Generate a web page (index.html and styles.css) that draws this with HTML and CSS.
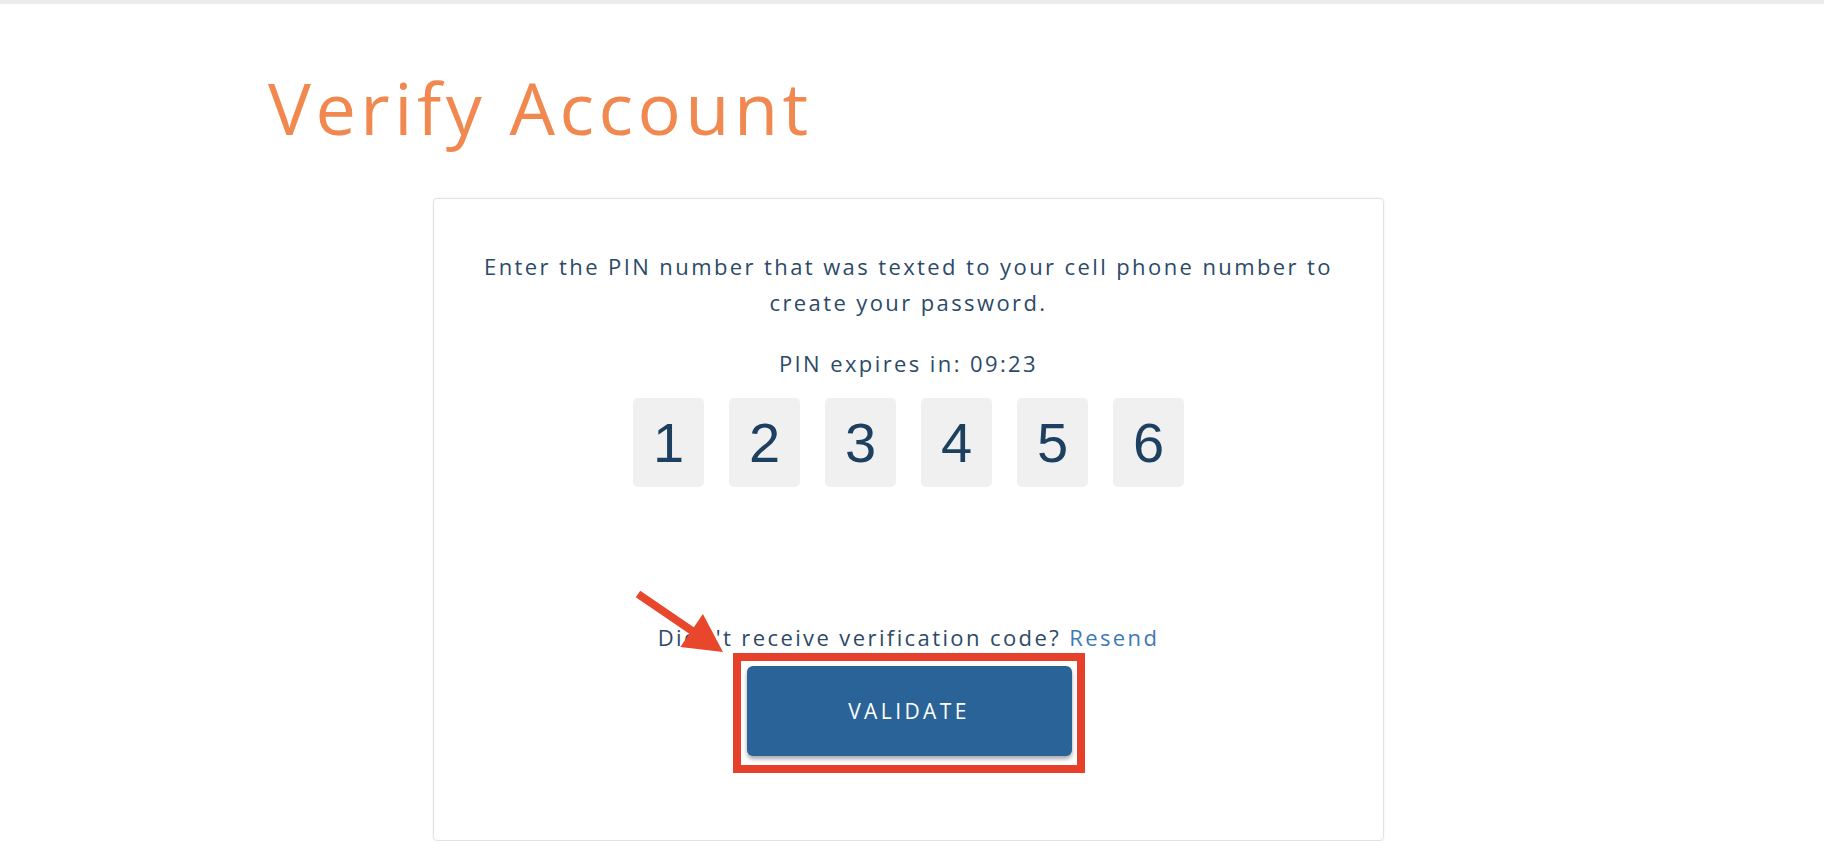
FILE: index.html
```html
<!DOCTYPE html>
<html>
<head>
  <title>Verify Account</title>
  <meta charset="utf-8" />
  <link rel="stylesheet" href="styles.css">
</head>
<body>

  <h1 class="title">Verify Account</h1>

  <div class="card">
    <p class="lead">Enter the PIN number that was texted to your cell phone number to<br>create your password.</p>
    <p class="expire">PIN expires in: <span id="timer">09:23</span></p>

    <div class="pin-row">
      <div class="pin">1</div>
      <div class="pin">2</div>
      <div class="pin">3</div>
      <div class="pin">4</div>
      <div class="pin">5</div>
      <div class="pin">6</div>
    </div>

    <p class="resend">Didn't receive verification code? <a href="#">Resend</a></p>

    <span class="highlight">
      <button class="validate">VALIDATE</button>
    </span>

    <svg class="arrow" width="100" height="72" viewBox="0 0 100 72">
      <line x1="8" y1="7" x2="63" y2="44.5" stroke="#e8472c" stroke-width="8" />
      <polygon points="93,65 50.3,60.1 72.9,27.1" fill="#e8472c" />
    </svg>
  </div>

</body>
</html>
```

FILE: styles.css
```css
html, body {
  margin: 0;
  background: #fff;
}

body {
  font-family: "Open Sans", sans-serif;
  border-top: 4px solid #ececec;
  color: #2c4a68;
}

.title {
  margin: 0;
  padding: 55px 0 0 268px;
  font-size: 72px;
  font-weight: 400;
  line-height: 96px;
  color: #f0884f;
  letter-spacing: 4.5px;
}

.card {
  position: relative;
  box-sizing: border-box;
  margin: 43px 0 0 433px;
  width: 951px;
  height: 643px;
  border: 1px solid #e2e2e2;
  border-radius: 4px;
  box-shadow: 0 0 2px rgba(0, 0, 0, 0.08);
  padding: 49px 20px 0;
  text-align: center;
}

.card p {
  margin: 0;
  font-size: 22px;
  line-height: 36px;
  letter-spacing: 2.4px;
}

.expire {
  margin-top: 25px !important;
}

.pin-row {
  display: flex;
  justify-content: center;
  gap: 25px;
  margin-top: 17px;
}

.pin {
  width: 71px;
  height: 89px;
  background: #f0f0f0;
  border-radius: 5px;
  font-family: "Liberation Sans", Arial, sans-serif;
  font-size: 56px;
  line-height: 89px;
  color: #1d3f60;
}

.card .resend {
  margin-top: 134px;
  line-height: 32px;
}

.resend a {
  color: #3d7ab5;
  text-decoration: none;
}

.highlight {
  display: inline-block;
  border: 8px solid #e6402a;
  padding: 5px 5px 9px 6px;
}

.validate {
  display: block;
  width: 325px;
  height: 90px;
  border: none;
  border-radius: 6px;
  background: #2a6397;
  color: #fff;
  font-family: "Open Sans", sans-serif;
  font-size: 21px;
  letter-spacing: 3.4px;
  box-shadow: 0 3px 4px rgba(0, 0, 0, 0.35);
  cursor: pointer;
}

.arrow {
  position: absolute;
  left: 196px;
  top: 388px;
}
```
